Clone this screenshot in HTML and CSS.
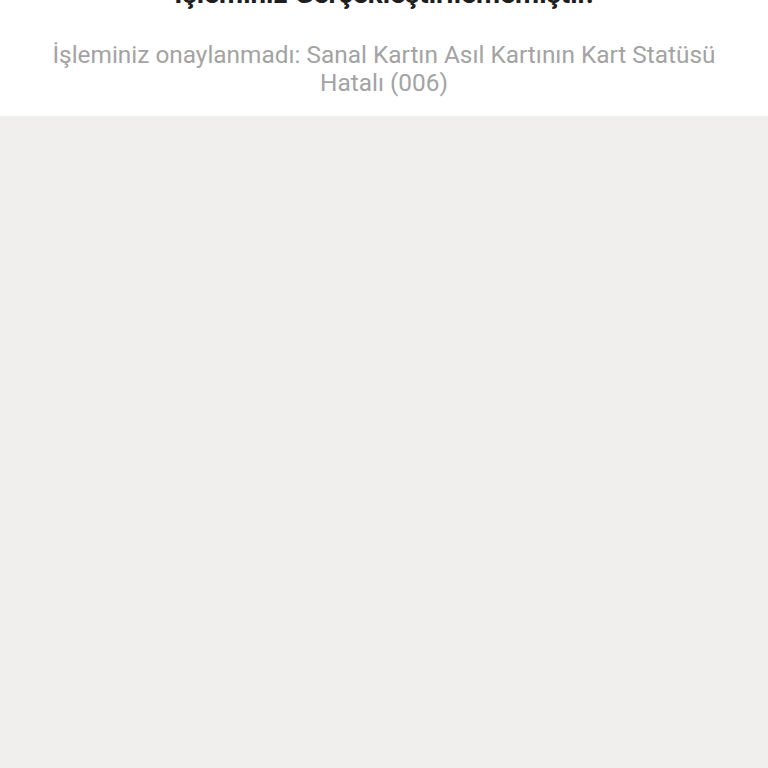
FILE: index.html
```html
<!DOCTYPE html>
<html lang="tr">
<head>
<meta charset="utf-8">
<link rel="stylesheet" href="styles.css">
</head>
<body>
<div class="result">
  <h1 class="result-title">İşleminiz Gerçekleştirilememiştir.</h1>
  <p class="result-message">İşleminiz onaylanmadı: Sanal Kartın Asıl Kartının Kart Statüsü Hatalı (006)</p>
</div>
<div class="page-rest"></div>
</body>
</html>
```

FILE: styles.css
```css
html, body {
  margin: 0;
  padding: 0;
  height: 100%;
}
body {
  background: #f0efed;
  font-family: Roboto, "Noto Sans", sans-serif;
  overflow: hidden;
}
.result {
  background: #ffffff;
  text-align: center;
  padding: 0 40px 19px;
  margin-top: -22px;
}
.result-title {
  margin: 0;
  font-size: 27.8px;
  line-height: 32px;
  font-weight: 700;
  color: #1e1e1e;
}
.result-message {
  margin: 31px 0 0;
  font-size: 24.4px;
  line-height: 28px;
  color: #a3a3a3;
}
```
